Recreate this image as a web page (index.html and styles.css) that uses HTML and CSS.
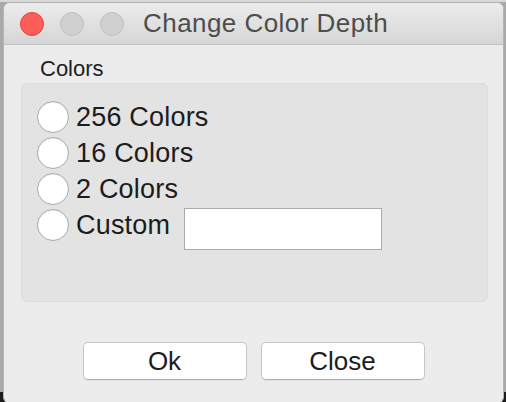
FILE: index.html
```html
<!DOCTYPE html>
<html>
<head>
<meta charset="utf-8">
<link rel="stylesheet" href="styles.css">
</head>
<body>
<div class="window">
  <div class="titlebar">
    <div class="lights">
      <span class="light close"></span>
      <span class="light idle"></span>
      <span class="light idle"></span>
    </div>
    <div class="title">Change Color Depth</div>
  </div>
  <div class="content">
    <div class="group-label">Colors</div>
    <div class="group">
      <label class="row"><span class="radio"></span><span class="text">256 Colors</span></label>
      <label class="row"><span class="radio"></span><span class="text">16 Colors</span></label>
      <label class="row"><span class="radio"></span><span class="text">2 Colors</span></label>
      <label class="row"><span class="radio"></span><span class="text custom">Custom</span><span class="field"></span></label>
    </div>
    <div class="buttons">
      <button class="btn">Ok</button>
      <button class="btn">Close</button>
    </div>
  </div>
</div>
</body>
</html>
```
FILE: styles.css
```css
html, body {
  margin: 0;
  padding: 0;
}
body {
  width: 506px;
  height: 402px;
  overflow: hidden;
  background: linear-gradient(to bottom, #d8d8d8 0, #d8d8d8 2px, #a9a9a9 2px, #a9a9a9 392px, #1c1c1c 392px);
  font-family: "Liberation Sans", Arial, sans-serif;
}
.window {
  box-sizing: border-box;
  margin: 2px 0 0 3px;
  width: 501px;
  height: 402px;
  border: 1px solid #b4b4b4;
  border-radius: 7px;
  background: #ececec;
  overflow: hidden;
}
.titlebar {
  height: 41px;
  border-bottom: 1px solid #c2c2c2;
  background: linear-gradient(to bottom, #ececec, #d6d6d6);
  display: flex;
  align-items: center;
}
.lights {
  display: flex;
  gap: 16px;
  margin-left: 16px;
}
.light {
  box-sizing: border-box;
  width: 24px;
  height: 24px;
  border-radius: 50%;
}
.light.close {
  background: #fc5f57;
  border: 1px solid #e0443e;
}
.light.idle {
  background: #d0d0d0;
  border: 1px solid #c0c0c0;
}
.title {
  margin-left: 19px;
  font-size: 26px;
  color: #4d4d4d;
  letter-spacing: 0.45px;
}
.content {
  padding: 11px 0 0 0;
}
.group-label {
  margin-left: 36px;
  font-size: 22px;
  line-height: 26px;
  color: #1e1e1e;
}
.group {
  box-sizing: border-box;
  margin: 1px 0 0 17px;
  width: 467px;
  height: 219px;
  background: #e3e3e3;
  border: 1px solid #dcdcdc;
  border-radius: 6px;
  padding: 15px 0 0 15px;
}
.row {
  display: flex;
  align-items: center;
  height: 36px;
  font-size: 27px;
  color: #1c1c1c;
  letter-spacing: 0.2px;
}
.radio {
  box-sizing: border-box;
  width: 32px;
  height: 32px;
  border-radius: 50%;
  background: #fff;
  border: 1px solid #aaaaaa;
  box-shadow: inset 0 1px 1px rgba(0,0,0,0.08);
  flex: none;
}
.text {
  margin-left: 7px;
}
.field {
  box-sizing: border-box;
  width: 198px;
  height: 42px;
  margin: 8px 0 0 14px;
  background: #fff;
  border: 1px solid #ababab;
  flex: none;
}
.buttons {
  display: flex;
  justify-content: center;
  gap: 14px;
  margin-top: 40px;
}
.btn {
  box-sizing: border-box;
  width: 164px;
  height: 38px;
  background: #fff;
  border: 1px solid #c6c6c6;
  border-bottom-color: #b0b0b0;
  border-radius: 5px;
  font-family: "Liberation Sans", Arial, sans-serif;
  font-size: 26px;
  color: #1c1c1c;
  padding: 0;
  box-shadow: 0 1px 0 rgba(0,0,0,0.05);
}
```
